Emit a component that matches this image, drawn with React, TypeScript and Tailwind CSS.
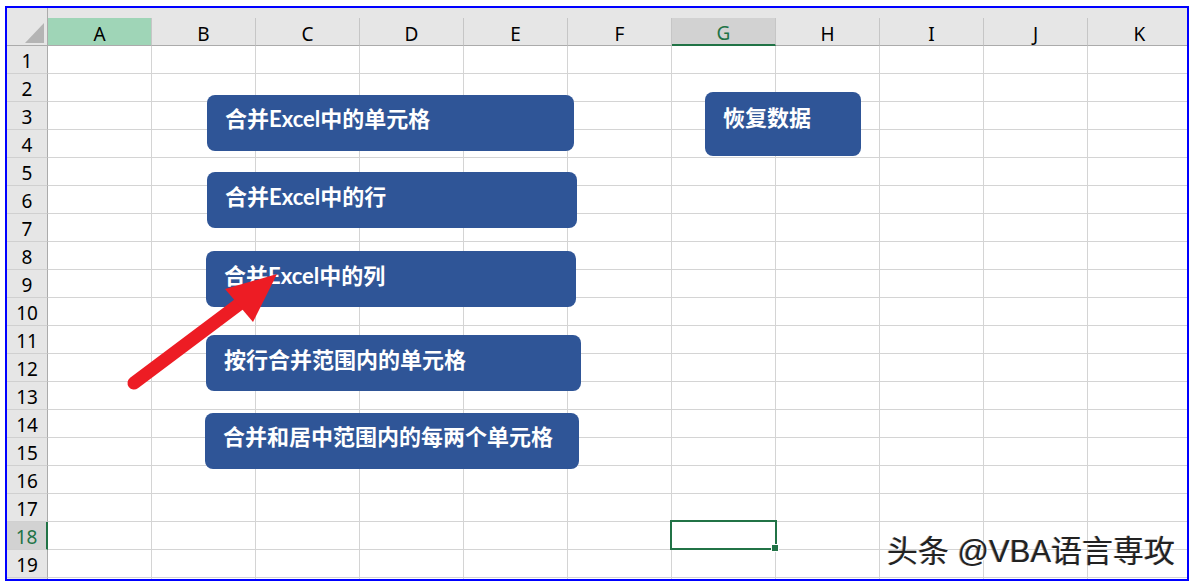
import React from "react";

const COLS = ["A", "B", "C", "D", "E", "F", "G", "H", "I", "J", "K"];
const ROWS = Array.from({ length: 20 }, (_, i) => i + 1);

type Shape = { text: string; left: number; top: number; w: number; h: number; pt: number };

const SHAPES: Shape[] = [
  { text: "合并Excel中的单元格", left: 207, top: 95, w: 367, h: 56, pt: 10 },
  { text: "合并Excel中的行", left: 207, top: 172, w: 370, h: 56, pt: 11 },
  { text: "合并Excel中的列", left: 206, top: 251, w: 370, h: 56, pt: 11 },
  { text: "按行合并范围内的单元格", left: 206, top: 335, w: 375, h: 56, pt: 11 },
  { text: "合并和居中范围内的每两个单元格", left: 205, top: 413, w: 374, h: 56, pt: 10 },
  { text: "恢复数据", left: 705, top: 92, w: 156, h: 64, pt: 12 },
];

export default function App() {
  return (
    <div
      className="relative w-[1194px] h-[587px] bg-white overflow-hidden pl-[5px] pt-[6px]"
      style={{ fontFamily: '"Noto Sans", "Noto Sans CJK SC", sans-serif' }}
    >
      <div className="w-[1184px] h-[575px] border-2 border-[#0000ff] overflow-hidden bg-white">
        {/* Header */}
        <div className="flex h-[38px] bg-[#e6e6e6]">
          <div className="relative w-[41px] shrink-0 h-full border-r border-b border-[#ababab]">
            <svg className="absolute right-[3px] bottom-[2px]" width="19" height="20" viewBox="0 0 19 20">
              <polygon points="0,20 19,20 19,0" fill="#b4b4b4" />
            </svg>
          </div>
          {COLS.map((c) => {
            const isG = c === "G";
            const isA = c === "A";
            return (
              <div key={c} className="w-[104px] shrink-0 h-full flex flex-col">
                <div className="h-[10px] shrink-0" />
                <div
                  className={
                    "flex-1 flex items-center justify-center pt-[5px] text-[19px] leading-none border-r border-[#c6c6c6] " +
                    (isG
                      ? "bg-[#d2d2d2] text-[#217346] border-b-2 border-b-[#217346]"
                      : isA
                      ? "bg-[#9fd5b7] text-black border-b border-b-[#ababab]"
                      : "text-black border-b border-b-[#ababab]")
                  }
                >
                  {c}
                </div>
              </div>
            );
          })}
        </div>
        {/* Rows */}
        {ROWS.map((r) => {
          const sel = r === 18;
          const last = r === 20;
          return (
            <div key={r} className="flex h-[28px]">
              <div
                className={
                  "w-[41px] shrink-0 h-full flex items-center justify-center pt-[3px] text-[19px] leading-none border-b border-b-[#d0d0d0] " +
                  (sel
                    ? "bg-[#d2d2d2] text-[#217346] border-r-2 border-r-[#217346]"
                    : "bg-[#e6e6e6] text-black border-r border-r-[#ababab]")
                }
              >
                {last ? "" : r}
              </div>
              {COLS.map((c) => (
                <div key={c} className="w-[104px] shrink-0 h-full border-r border-b border-[#d4d4d4]" />
              ))}
            </div>
          );
        })}
      </div>

      {/* Selection of G18 */}
      <div className="absolute left-[670px] top-[520px] w-[107px] h-[30px] border-2 border-[#217346]" />
      <div className="absolute left-[771px] top-[544px] w-[8px] h-[8px] bg-[#217346] border border-white" />

      {/* Shapes */}
      {SHAPES.map((s) => (
        <div
          key={s.text}
          className="absolute bg-[#2f5597] rounded-[8px] text-white font-bold text-[22px] leading-[28px] pl-[18px] whitespace-nowrap"
          style={{
            left: s.left,
            top: s.top,
            width: s.w,
            height: s.h,
            paddingTop: s.pt,
            fontFamily: '"Lato", "Noto Sans CJK SC", sans-serif',
          }}
        >
          {s.text}
        </div>
      ))}

      {/* Arrow */}
      <svg className="absolute left-0 top-0 pointer-events-none" width="1194" height="587" viewBox="0 0 1194 587">
        <line x1="134" y1="383" x2="246" y2="299" stroke="#ed1c24" strokeWidth="13" strokeLinecap="round" />
        <polygon points="277,274 225,289 253,322" fill="#ed1c24" />
      </svg>

      {/* Watermark */}
      <div
        className="absolute left-[887px] top-[531px] text-[31px] leading-[42px] whitespace-nowrap text-[#222]"
        style={{
          fontFamily: '"Liberation Sans", "Noto Sans CJK SC", sans-serif',
          textShadow: "1px 1px 0 #ffffff, -1px 0 0 rgba(0,0,0,0.35)",
        }}
      >
        头条 @VBA语言専攻
      </div>
    </div>
  );
}
